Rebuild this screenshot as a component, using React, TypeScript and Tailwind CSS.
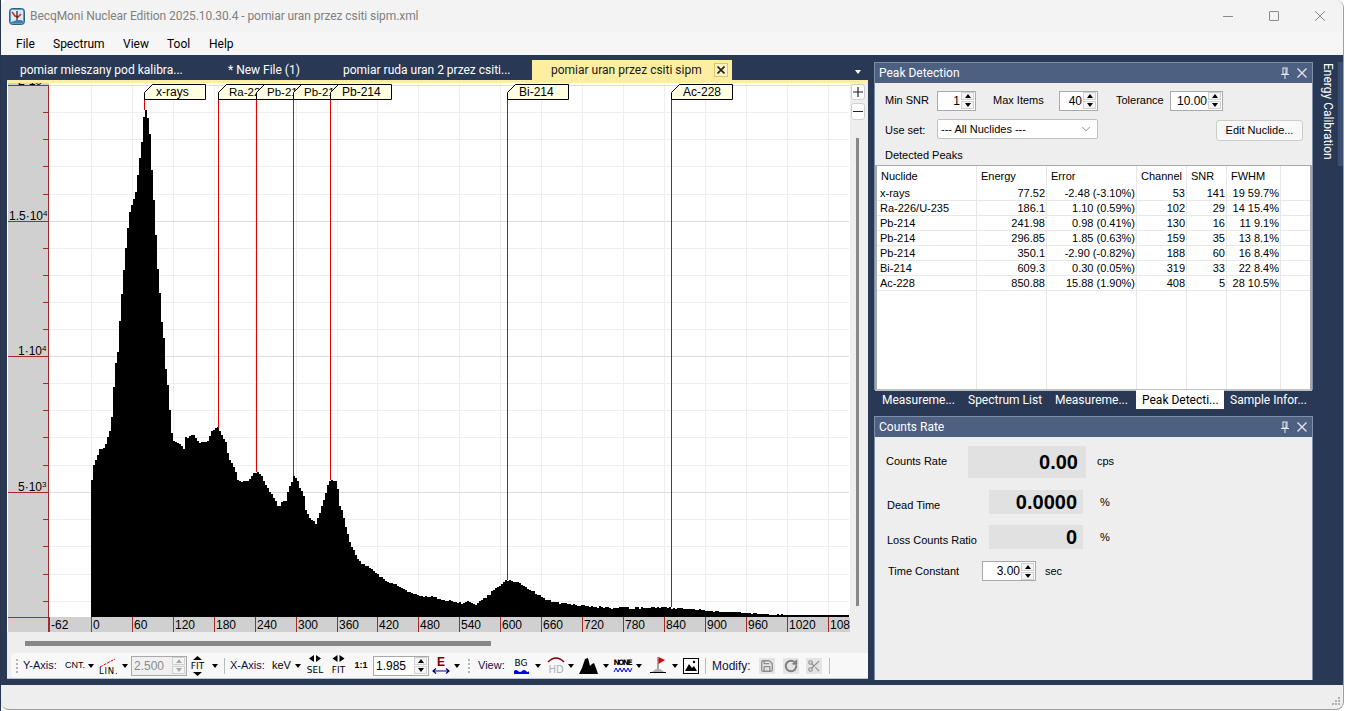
import { RotateCw, Save, Scissors, ChevronDown } from 'lucide-react'

// spectrum outline, page coordinates read from the screenshot
const OUTLINE: [number, number][] = [
  [91, 480], [92, 468], [95, 460], [99, 449], [104, 448], [106, 440], [110, 428], [112, 405], [114, 368], [117, 352],
  [120, 305], [122, 282], [124, 258], [127, 228], [129, 212], [132, 202], [136, 188], [137, 175], [139, 158], [141, 142],
  [142, 122], [144, 112], [145, 110], [146, 113], [148, 123], [150, 145], [151, 170], [153, 200], [155, 235], [156, 255],
  [158, 283], [160, 302], [161, 322], [163, 338], [164, 360], [166, 378], [168, 392], [169, 410], [170, 425], [172, 440],
  [176, 442], [180, 445], [183, 448], [185, 438], [190, 436], [192, 435], [196, 438], [198, 443], [202, 443], [206, 441],
  [208, 440], [210, 433], [213, 429], [217, 428], [219, 431], [222, 437], [225, 442], [226, 450], [229, 460], [232, 465],
  [235, 472], [237, 480], [240, 482], [245, 481], [250, 478], [255, 472], [258, 473], [262, 478], [266, 487], [270, 493],
  [276, 503], [278, 508], [281, 503], [285, 500], [288, 488], [292, 480], [293, 476], [296, 480], [299, 487], [303, 496],
  [305, 510], [308, 516], [312, 521], [315, 523], [318, 516], [320, 508], [323, 500], [326, 490], [328, 480], [335, 480],
  [337, 488], [339, 505], [342, 512], [344, 523], [347, 535], [350, 545], [353, 550], [356, 557], [360, 562], [364, 566],
  [370, 568], [375, 572], [380, 578], [385, 580], [390, 583], [395, 585], [400, 587], [405, 590], [410, 593], [415, 594],
  [420, 596], [430, 597], [440, 599], [450, 601], [460, 603], [470, 602], [475, 604], [480, 600], [485, 597], [490, 593],
  [495, 588], [500, 584], [505, 581], [510, 580], [515, 582], [520, 584], [525, 587], [530, 590], [535, 593], [540, 597],
  [545, 600], [555, 602], [565, 604], [575, 605], [585, 606], [600, 607], [615, 608], [640, 608], [660, 607], [670, 608],
  [690, 609], [700, 610], [710, 611], [730, 612], [745, 613], [760, 614], [790, 615], [849, 615],
]

const spectrumPath = () => {
  let d = 'M91 617'
  let seg = 0
  for (let x = 91; x < 849; x += 2) {
    while (seg < OUTLINE.length - 2 && OUTLINE[seg + 1][0] <= x) seg++
    const [x0, y0] = OUTLINE[seg]
    const [x1, y1] = OUTLINE[seg + 1]
    let y = y0 + ((y1 - y0) * (x - x0)) / (x1 - x0)
    const noise = Math.sin(x * 12.9898) * 43758.5453
    const amp = x > 175 && x < 700 ? 2 : x >= 700 ? 1 : 0
    y += ((noise - Math.floor(noise)) - 0.5) * amp
    d += `V${Math.min(617, Math.round(y))}H${x + 2}`
  }
  return d + 'V617Z'
}

const X_TICKS = [49, 91, 132, 173, 214, 255, 296, 337, 377, 418, 459, 500, 541, 582, 623, 664, 705, 746, 787, 828]
const X_LABELS = ['-62', '0', '60', '120', '180', '240', '300', '360', '420', '480', '540', '600', '660', '720', '780', '840', '900', '960', '1020', '1080']
const MINOR_Y = [112, 139, 166, 194, 248, 275, 302, 329, 383, 410, 437, 465, 519, 546, 574, 601]
const MAJOR_Y = [85, 221, 356, 492]
const TAGS = [
  { x: 144, w: 61, end: 110, label: 'x-rays', size: 12, pad: 12 },
  { x: 218, w: 62, end: 428, label: 'Ra-226/U-235', size: 11.5, pad: 11 },
  { x: 256, w: 62, end: 472, label: 'Pb-214', size: 11.5, pad: 11 },
  { x: 293, w: 62, end: 476, label: 'Pb-214', size: 11.5, pad: 11 },
  { x: 330, w: 61, end: 480, label: 'Pb-214', size: 12, pad: 12 },
  { x: 507, w: 61, end: 580, label: 'Bi-214', size: 12, pad: 12 },
  { x: 671, w: 61, end: 607, label: 'Ac-228', size: 12, pad: 12 },
]

function Chart() {
  return (
    <svg width={842} height={549} viewBox="8 83 842 549" className="block shrink-0 font-['Liberation_Sans',sans-serif]">
      <rect x={8} y={83} width={842} height={549} fill="#ffffff" />
      {X_TICKS.slice(1).map((x) => <line key={x} x1={x + 0.5} x2={x + 0.5} y1={84} y2={617} stroke="#eeeeee" />)}
      {MINOR_Y.map((y) => <line key={y} x1={49} x2={849} y1={y + 0.5} y2={y + 0.5} stroke="#eeeeee" />)}
      {MAJOR_Y.map((y) => <line key={y} x1={49} x2={849} y1={y + 0.5} y2={y + 0.5} stroke="#dcdcdc" />)}
      <path d={spectrumPath()} fill="#000000" />
      <rect x={8} y={83} width={41} height={549} fill="#d0d0d0" />
      <rect x={8} y={617} width={842} height={15} fill="#d0d0d0" />
      <line x1={48.5} x2={48.5} y1={85} y2={632} stroke="#a52a2a" />
      <line x1={8} x2={49} y1={617.5} y2={617.5} stroke="#a52a2a" />
      {MINOR_Y.map((y) => <line key={y} x1={43} x2={49} y1={y + 0.5} y2={y + 0.5} stroke="#a52a2a" />)}
      {MAJOR_Y.map((y) => <line key={y} x1={8} x2={49} y1={y + 0.5} y2={y + 0.5} stroke="#a52a2a" />)}
      <g fontSize={12} fill="#000000">
        <text x={18} y={85}>2·10<tspan fontSize={8} dy={-4}>4</tspan></text>
        <text x={9} y={220}>1.5·10<tspan fontSize={8} dy={-4}>4</tspan></text>
        <text x={18} y={355}>1·10<tspan fontSize={8} dy={-4}>4</tspan></text>
        <text x={18} y={491}>5·10<tspan fontSize={8} dy={-4}>3</tspan></text>
      </g>
      {X_TICKS.map((x, i) => (
        <g key={x}>
          <line x1={x + 0.5} x2={x + 0.5} y1={617} y2={632} stroke="#a52a2a" />
          <text x={x + 2} y={629} fontSize={12} fill="#000000">{X_LABELS[i]}</text>
        </g>
      ))}
      {TAGS.map((t) => (
        <line key={t.x} x1={t.x + 0.5} x2={t.x + 0.5} y1={98} y2={t.end} stroke="#e00000" />
      ))}
      {TAGS.map((t) => (
        <g key={t.x}>
          <path d={`M${t.x + 0.5} 99.5V92.5L${t.x + 8.5} 84.5H${t.x + t.w + 0.5}V99.5Z`} fill="#ffffe1" stroke="#000000" />
          <text x={t.x + t.pad} y={96} fontSize={t.size} fill="#000000">{t.label}</text>
        </g>
      ))}
    </svg>
  )
}

function Caret({ className = '' }: { className?: string }) {
  return <span className={`inline-block w-0 h-0 border-x-[3.5px] border-t-[4px] border-x-transparent ${className || 'border-t-black'}`} />
}

function CaretBox({ w = 10 }: { w?: number }) {
  return (
    <span className="flex justify-center shrink-0" style={{ width: w }}>
      <Caret />
    </span>
  )
}

function SpinButtons({ disabled = false }: { disabled?: boolean }) {
  const c = disabled ? 'border-b-[#a8a8a8]' : 'border-b-black'
  const d = disabled ? 'border-t-[#a8a8a8]' : 'border-t-black'
  return (
    <span className="flex flex-col w-[13px] h-[17px] shrink-0 gap-px">
      <span className="flex-1 flex items-center justify-center bg-[#f4f4f4] border border-[#d0d0d0]">
        <span className={`w-0 h-0 border-x-[3.5px] border-b-[4px] border-x-transparent ${c}`} />
      </span>
      <span className="flex-1 flex items-center justify-center bg-[#f4f4f4] border border-[#d0d0d0]">
        <span className={`w-0 h-0 border-x-[3.5px] border-t-[4px] border-x-transparent ${d}`} />
      </span>
    </span>
  )
}

function Spin({ value, w, align = 'right', disabled = false }: { value: string; w: string; align?: 'left' | 'right'; disabled?: boolean }) {
  return (
    <div className={`${w} h-[20px] flex items-center justify-between border border-[#a9a9a9] pr-px shrink-0 ${disabled ? 'bg-[#f0f0f0] text-[#8a8a8a]' : 'bg-white text-black'}`}>
      <span className={`flex-1 text-[12px] ${align === 'right' ? 'text-right pr-[1px]' : 'text-left pl-[2px]'}`}>{value}</span>
      <SpinButtons disabled={disabled} />
    </div>
  )
}

function Grip() {
  return (
    <span className="flex flex-col gap-[2px] shrink-0">
      {[0, 1, 2, 3].map((i) => <span key={i} className="block w-[2px] h-[2px] bg-[#b4b4b4]" />)}
    </span>
  )
}

function Sep() {
  return <span className="block w-px h-[16px] bg-[#b8bcc4] shrink-0" />
}

function FitVertical() {
  return (
    <svg width={21} height={22} viewBox="0 0 21 22" className="shrink-0">
      <path d="M6 5L10.5 1L15 5Z" fill="#000" />
      <text x={10.5} y={14} textAnchor="middle" fontSize={9} fill="#000" fontFamily="'DejaVu Sans',sans-serif">FIT</text>
      <path d="M6 17L10.5 21L15 17Z" fill="#000" />
    </svg>
  )
}

function HorizontalIcon({ label, w }: { label: string; w: number }) {
  const c = w / 2
  return (
    <svg width={w} height={22} viewBox={`0 0 ${w} 22`} className="shrink-0">
      <path d={`M${c - 1} 0V7L${c - 6} 3.5Z`} fill="#000" />
      <path d={`M${c + 1} 0V7L${c + 6} 3.5Z`} fill="#000" />
      <text x={c} y={18} textAnchor="middle" fontSize={9} fill="#000" fontFamily="'DejaVu Sans',sans-serif">{label}</text>
    </svg>
  )
}

function Toolbar() {
  return (
    <div className="h-[25px] ml-[4px] flex items-center bg-[#f8f8f8] rounded-l-[3px] text-[11px] text-[#10103c] font-['Liberation_Sans',sans-serif] overflow-hidden">
      <span className="w-[12px] flex justify-center shrink-0"><Grip /></span>
      <span className="w-[42px] shrink-0">Y-Axis:</span>
      <span className="w-[21px] shrink-0 text-[9px] text-black">CNT.</span>
      <CaretBox />
      <span className="w-[24px] flex justify-center shrink-0">
        <svg width={18} height={20} viewBox="0 0 18 20">
          <path d="M1 11L16 3" stroke="#e00000" strokeDasharray="3 1" />
          <text x={0} y={18} fontSize={8.5} fill="#000" letterSpacing={0.8} fontFamily="'DejaVu Sans',sans-serif">LIN.</text>
        </svg>
      </span>
      <CaretBox />
      <span className="ml-px"><Spin value="2.500" w="w-[56px]" align="left" disabled /></span>
      <FitVertical />
      <span className="w-[2px] shrink-0" />
      <CaretBox />
      <span className="w-[4px] shrink-0" />
      <Sep />
      <span className="w-[5px] shrink-0" />
      <span className="w-[42px] shrink-0">X-Axis:</span>
      <span className="w-[21px] shrink-0 text-black">keV</span>
      <CaretBox />
      <HorizontalIcon label="SEL" w={24} />
      <HorizontalIcon label="FIT" w={23} />
      <span className="w-[22px] text-center text-[9px] font-bold text-black shrink-0">1:1</span>
      <span className="ml-px"><Spin value="1.985" w="w-[56px]" align="left" /></span>
      <span className="ml-px w-[22px] flex justify-center shrink-0">
        <svg width={20} height={22} viewBox="0 0 20 22">
          <text x={10} y={11} textAnchor="middle" fontSize={12} fontWeight="bold" fill="#7a0000" fontFamily="'Liberation Sans',sans-serif">E</text>
          <path d="M2 16H18M5 13.5L2 16L5 18.5M15 13.5L18 16L15 18.5" stroke="#00008b" strokeWidth={1.2} fill="none" />
        </svg>
      </span>
      <CaretBox />
      <span className="w-[14px] flex justify-center shrink-0"><Grip /></span>
      <span className="w-[2px] shrink-0" />
      <span className="w-[35px] shrink-0">View:</span>
      <svg width={20} height={20} viewBox="0 0 20 20" className="shrink-0">
        <text x={8} y={10} textAnchor="middle" fontSize={9} fill="#000" fontFamily="'DejaVu Sans',sans-serif">BG</text>
        <path d="M1 18V15Q3 13 5 15T9 15T13 15T16 15V18Z" fill="#0000ee" />
      </svg>
      <CaretBox w={10} />
      <span className="w-[4px] shrink-0" />
      <svg width={18} height={22} viewBox="0 0 18 22" className="shrink-0">
        <path d="M1 7Q9 -1 17 7" stroke="#8b0000" strokeWidth={1.6} fill="none" />
        <text x={9} y={18} textAnchor="middle" fontSize={10} fill="#b0b0b0" fontFamily="'DejaVu Sans',sans-serif">HD</text>
      </svg>
      <span className="w-[1px] shrink-0" />
      <CaretBox w={10} />
      <span className="w-[3px] shrink-0" />
      <svg width={19} height={18} viewBox="0 0 19 18" className="shrink-0">
        <path d="M0 17L3 11L6 2L9 1L11 9L13 7L15 6L17 11L19 17Z" fill="#000" />
      </svg>
      <CaretBox w={15} />
      <svg width={20} height={18} viewBox="0 0 20 18" className="shrink-0">
        <text x={10} y={8} textAnchor="middle" fontSize={7.5} fontWeight="bold" fill="#000" fontFamily="'DejaVu Sans',sans-serif" textLength={19}>NONE</text>
        <path d="M1 15L3 11L5 15L7 11L9 15L11 11L13 15L15 11L17 15L19 11" stroke="#0000ee" fill="none" />
      </svg>
      <CaretBox w={12} />
      <span className="w-[5px] shrink-0" />
      <svg width={17} height={20} viewBox="0 0 17 20" className="shrink-0">
        <path d="M8 1V13" stroke="#555" />
        <path d="M8.5 1L15 4L8.5 8Z" fill="#e00000" />
        <path d="M2 16Q8 9 14 16Z" fill="#b0b0b0" />
        <path d="M0 16.5H16" stroke="#000" />
      </svg>
      <CaretBox w={16} />
      <svg width={16} height={16} viewBox="0 0 16 16" className="shrink-0">
        <rect x={0.5} y={0.5} width={15} height={15} fill="#fff" stroke="#000" />
        <circle cx={11} cy={4} r={1.2} fill="#000" />
        <path d="M2 13L6 6L9 10L11 8L14 13Z" fill="#000" />
      </svg>
      <span className="w-[6px] shrink-0" />
      <Sep />
      <span className="w-[6px] shrink-0" />
      <span className="w-[44px] shrink-0 text-[12px]">Modify:</span>
      <span className="w-[3px] shrink-0" />
      <span className="w-[16px] h-[16px] bg-[#e4e4e4] flex items-center justify-center shrink-0"><Save size={14} strokeWidth={2.2} color="#8c8c8c" /></span>
      <span className="w-[8px] shrink-0" />
      <span className="w-[16px] h-[16px] bg-[#e4e4e4] flex items-center justify-center shrink-0"><RotateCw size={14} strokeWidth={3.4} color="#808080" /></span>
      <span className="w-[7px] shrink-0" />
      <span className="w-[16px] h-[16px] bg-[#e4e4e4] flex items-center justify-center shrink-0"><Scissors size={14} strokeWidth={2} color="#909090" /></span>
      <span className="w-[7px] shrink-0" />
      <Sep />
    </div>
  )
}

function DocTab({ label, w, pl }: { label: string; w: string; pl: string }) {
  return <div className={`${w} ${pl} shrink-0 h-[20px] flex items-center text-white text-[12px] whitespace-nowrap`}>{label}</div>
}

function PanelHeader({ title }: { title: string }) {
  return (
    <div className="h-[20px] shrink-0 bg-[#4d6082] flex items-center justify-between pl-[4px] pr-[5px] text-white text-[12px] font-['Roboto',sans-serif]">
      <span>{title}</span>
      <span className="flex items-center gap-[7px]">
        <svg width={10} height={12} viewBox="0 0 10 12">
          <path d="M2.5 1H7.5M3 1V7H7V1M1 7.5H9M5 8V12M6 1.5V7" stroke="#e4e8f0" fill="none" />
        </svg>
        <svg width={10} height={10} viewBox="0 0 10 10">
          <path d="M0.5 0.5L9.5 9.5M9.5 0.5L0.5 9.5" stroke="#dfe4ec" strokeWidth={1.4} />
        </svg>
      </span>
    </div>
  )
}

const PEAKS = [
  ['x-rays', '77.52', '-2.48 (-3.10%)', '53', '141', '19 59.7%'],
  ['Ra-226/U-235', '186.1', '1.10 (0.59%)', '102', '29', '14 15.4%'],
  ['Pb-214', '241.98', '0.98 (0.41%)', '130', '16', '11 9.1%'],
  ['Pb-214', '296.85', '1.85 (0.63%)', '159', '35', '13 8.1%'],
  ['Pb-214', '350.1', '-2.90 (-0.82%)', '188', '60', '16 8.4%'],
  ['Bi-214', '609.3', '0.30 (0.05%)', '319', '33', '22 8.4%'],
  ['Ac-228', '850.88', '15.88 (1.90%)', '408', '5', '28 10.5%'],
]
const COLUMNS = [
  { name: 'Nuclide', w: 'w-[100px]' },
  { name: 'Energy', w: 'w-[70px]' },
  { name: 'Error', w: 'w-[90px]' },
  { name: 'Channel', w: 'w-[50px]' },
  { name: 'SNR', w: 'w-[40px]' },
  { name: 'FWHM', w: 'w-[54px]' },
]

function PeakTable() {
  return (
    <div className="h-[226px] flex bg-white border-2 border-t border-[#a8a8a8] border-b-[#c0c0c0] text-[11px] text-black overflow-hidden">
      {COLUMNS.map((c, i) => (
        <div key={c.name} className={`${c.w} shrink-0 border-r border-[#e8e8e8] flex flex-col`}>
          <div className="h-[20px] flex items-center pl-[4px]">{c.name}</div>
          {PEAKS.map((row, r) => (
            <div key={r} className={`h-[15px] shrink-0 flex items-center border-b border-[#e8e8e8] whitespace-nowrap ${i === 0 ? 'pl-[3px]' : 'justify-end pr-[1px]'}`}>
              {row[i]}
            </div>
          ))}
        </div>
      ))}
      <div className="flex-1 flex flex-col">
        <div className="h-[20px]" />
        {PEAKS.map((_, r) => <div key={r} className="h-[15px] shrink-0 border-b border-[#e8e8e8]" />)}
      </div>
    </div>
  )
}

function ReadoutRow({ label, value, unit, labelW, boxW, gap, mt }: { label: string; value: string; unit: string; labelW: string; boxW: string; gap: string; mt: string }) {
  return (
    <div className={`flex items-center ${mt}`}>
      <span className={`${labelW} shrink-0`}>{label}</span>
      <div className={`${boxW} shrink-0 bg-[#e1e1e1] flex items-center justify-end text-[20px] font-bold text-black`}>{value}</div>
      <span className={gap}>{unit}</span>
    </div>
  )
}

export default function App() {
  return (
    <div className="w-[1345px] h-[711px] bg-white border-l border-[#26364d] overflow-hidden font-['Liberation_Sans',sans-serif]">
      <div className="w-[1343px] h-[710px] flex flex-col bg-[#eeeeee] rounded-lg border-r border-b border-[#a0a0a0] overflow-hidden">
        {/* title bar */}
        <div className="h-[32px] shrink-0 bg-[#f3f3f3] flex items-center justify-between font-['Roboto',sans-serif]">
          <div className="flex items-center pl-[8px]">
            <svg width={16} height={17} viewBox="0 0 16 17">
              <rect x={0.5} y={0.5} width={15} height={16} rx={3} fill="#5d9cc4" stroke="#2f5f80" />
              <rect x={2} y={2} width={12} height={13} rx={1} fill="#dbe9f2" />
              <path d="M3 4L6 8L9 9L12 6" stroke="#d03020" strokeWidth={1.6} fill="none" />
              <path d="M8 3V13H13" stroke="#223" strokeWidth={1.2} fill="none" />
              <path d="M2 15H14V13L8 12L2 14Z" fill="#3f7fa8" />
            </svg>
            <span className="ml-[5px] text-[12px] tracking-[-0.07px] text-[#808080] whitespace-nowrap">BecqMoni Nuclear Edition 2025.10.30.4 - pomiar uran przez csiti sipm.xml</span>
          </div>
          <div className="flex items-center h-full">
            <span className="w-[46px] flex justify-center"><span className="block w-[10px] h-px bg-[#8a8a8a]" /></span>
            <span className="w-[46px] flex justify-center"><span className="block w-[10px] h-[10px] border border-[#8a8a8a] rounded-[1px]" /></span>
            <span className="w-[46px] flex justify-center">
              <svg width={10} height={10} viewBox="0 0 10 10"><path d="M0 0L10 10M10 0L0 10" stroke="#8a8a8a" /></svg>
            </span>
          </div>
        </div>

        {/* menu */}
        <div className="h-[23px] shrink-0 bg-[#f6f6f6] flex items-center text-[12px] text-black font-['Roboto',sans-serif]">
          <span className="ml-[15px] w-[37px]">File</span>
          <span className="w-[70px]">Spectrum</span>
          <span className="w-[44px]">View</span>
          <span className="w-[42px]">Tool</span>
          <span>Help</span>
        </div>

        {/* workspace */}
        <div className="h-[630px] shrink-0 bg-[#293955] flex">
          <div className="w-[6px] shrink-0" />

          {/* document column */}
          <div className="w-[861px] shrink-0 flex flex-col">
            <div className="h-[25px] flex items-end font-['Roboto',sans-serif]">
              <DocTab label="pomiar mieszany pod kalibra..." w="w-[221px]" pl="pl-[13px]" />
              <DocTab label="* New File (1)" w="w-[115px]" pl="pl-0" />
              <DocTab label="pomiar ruda uran 2 przez csiti..." w="w-[189px]" pl="pl-0" />
              <div className="w-[200px] h-[20px] shrink-0 bg-[#fdeea2] flex items-center justify-between pl-[19px] pr-[4px] text-[12px] text-[#1a1a1a] whitespace-nowrap">
                <span>pomiar uran przez csiti sipm</span>
                <span className="w-[14px] h-[14px] flex items-center justify-center bg-[#fff3c4] border border-[#e5c365]">
                  <svg width={8} height={8} viewBox="0 0 8 8"><path d="M0.5 0.5L7.5 7.5M7.5 0.5L0.5 7.5" stroke="#222" strokeWidth={1.7} /></svg>
                </span>
              </div>
              <div className="flex-1 flex justify-end pb-[6px] pr-[7px]"><Caret className="border-t-white" /></div>
            </div>
            <div className="h-[3px] bg-[#fdeea2]" />
            <div className="flex-1 flex flex-col bg-[#eeeeee]">
              <div className="h-[549px] flex">
                <div className="w-px bg-white shrink-0" />
                <Chart />
                <div className="flex-1 flex flex-col items-center pt-px pr-[3px]">
                  <span className="w-[14px] h-[16px] bg-white border border-[#cfcfcf] rounded-[3px] flex items-center justify-center">
                    <svg width={10} height={10} viewBox="0 0 10 10"><path d="M5 0V10M0 5H10" stroke="#222" strokeWidth={1.2} /></svg>
                  </span>
                  <span className="mt-[3px] w-[14px] h-[17px] bg-white border border-[#cfcfcf] rounded-[3px] flex items-center justify-center">
                    <span className="block w-[10px] h-px bg-[#222]" />
                  </span>
                  <span className="mt-[18px] w-[3px] h-[468px] bg-[#888888]" />
                </div>
              </div>
              <div className="h-[21px] shrink-0 pl-[18px] pt-[9px]">
                <div className="w-[466px] h-[5px] bg-[#888888]" />
              </div>
              <Toolbar />
              <div className="h-px bg-[#b8c4d8]" />
            </div>
            <div className="h-[6px] shrink-0" />
          </div>

          <div className="w-[6px] shrink-0" />

          {/* tool panels */}
          <div className="w-[439px] shrink-0 flex flex-col pt-[7px] text-[11px] text-black">
            <div className="h-[328px] flex flex-col bg-[#eeeeee] border-x border-t border-[#7d8ea9]">
              <PanelHeader title="Peak Detection" />
              <div className="flex-1 flex flex-col">
                <div className="h-[19px] mt-[8px] flex items-center pl-[10px]">
                  <span className="w-[52px]">Min SNR</span>
                  <Spin value="1" w="w-[39px]" />
                  <span className="ml-[17px] w-[66px]">Max Items</span>
                  <Spin value="40" w="w-[39px]" />
                  <span className="ml-[18px] w-[54px]">Tolerance</span>
                  <Spin value="10.00" w="w-[53px]" />
                </div>
                <div className="h-[22px] mt-[9px] flex items-center pl-[10px]">
                  <span className="w-[52px]">Use set:</span>
                  <div className="w-[161px] h-[20px] flex items-center justify-between bg-white border border-[#c0c0c0] rounded-[2px] pl-[3px] pr-[4px] -mt-[2px]">
                    <span>--- All Nuclides ---</span>
                    <ChevronDown size={14} strokeWidth={1} color="#444" />
                  </div>
                  <div className="ml-[118px] mt-px w-[87px] h-[21px] flex items-center justify-center bg-[#f8f8f8] border border-[#cccccc] rounded-[3px]">Edit Nuclide...</div>
                </div>
                <div className="h-[14px] mt-[7px] pl-[10px] leading-[14px]">Detected Peaks</div>
                <div className="h-[3px]" />
                <PeakTable />
              </div>
            </div>

            <div className="h-[19px] flex items-center text-white text-[12px] font-['Roboto',sans-serif] whitespace-nowrap">
              <span className="w-[88px] pl-[8px]">Measureme...</span>
              <span className="w-[87px] pl-[6px]">Spectrum List</span>
              <span className="w-[87px] pl-[6px]">Measureme...</span>
              <span className="w-[88px] h-full pl-[6px] flex items-center bg-white text-black">Peak Detecti...</span>
              <span className="pl-[6px]">Sample Infor...</span>
            </div>

            <div className="h-[7px] shrink-0" />

            <div className="h-[264px] flex flex-col bg-[#eeeeee] border-x border-t border-[#7d8ea9]">
              <PanelHeader title="Counts Rate" />
              <div className="flex-1 flex flex-col pl-[11px]">
                <div className="flex items-center mt-[9px]">
                  <span className="w-[82px] shrink-0 -mt-[2px]">Counts Rate</span>
                  <div className="w-[118px] h-[32px] pr-[8px] shrink-0 bg-[#e1e1e1] flex items-center justify-end text-[20px] font-bold text-black">0.00</div>
                  <span className="ml-[11px] -mt-[2px]">cps</span>
                </div>
                <ReadoutRow label="Dead Time" value="0.0000" unit="%" labelW="w-[103px] pl-px pt-[7px]" boxW="w-[94px] h-[24px] pr-[6px]" gap="ml-[17px]" mt="mt-[12px]" />
                <ReadoutRow label="Loss Counts Ratio" value="0" unit="%" labelW="w-[103px] pl-px pt-[7px]" boxW="w-[94px] h-[24px] pr-[6px]" gap="ml-[17px]" mt="mt-[11px]" />
                <div className="flex items-center mt-[12px]">
                  <span className="w-[96px] pl-[2px]">Time Constant</span>
                  <Spin value="3.00" w="w-[54px]" />
                  <span className="ml-[9px] pt-px">sec</span>
                </div>
              </div>
            </div>
          </div>

          <div className="w-[5px] shrink-0" />

          {/* auto-hidden tab */}
          <div className="flex-1 flex pt-[7px]">
            <div className="w-[20px] h-fit leading-[20px] pt-px text-white text-[12px] font-['Roboto',sans-serif] [writing-mode:vertical-rl] whitespace-nowrap">Energy Calibration</div>
            <div className="flex-1 h-[104px] bg-[#3d4f70]" />
          </div>
        </div>

        {/* status bar */}
        <div className="flex-1 flex items-end justify-end pr-[2px] pb-[3px]">
          <svg width={10} height={10} viewBox="0 0 10 10">
            <path d="M7 1h2v2H7zM4 4h2v2H4zM7 4h2v2H7zM1 7h2v2H1zM4 7h2v2H4zM7 7h2v2H7z" fill="#b0b0b0" />
          </svg>
        </div>
      </div>
    </div>
  )
}
